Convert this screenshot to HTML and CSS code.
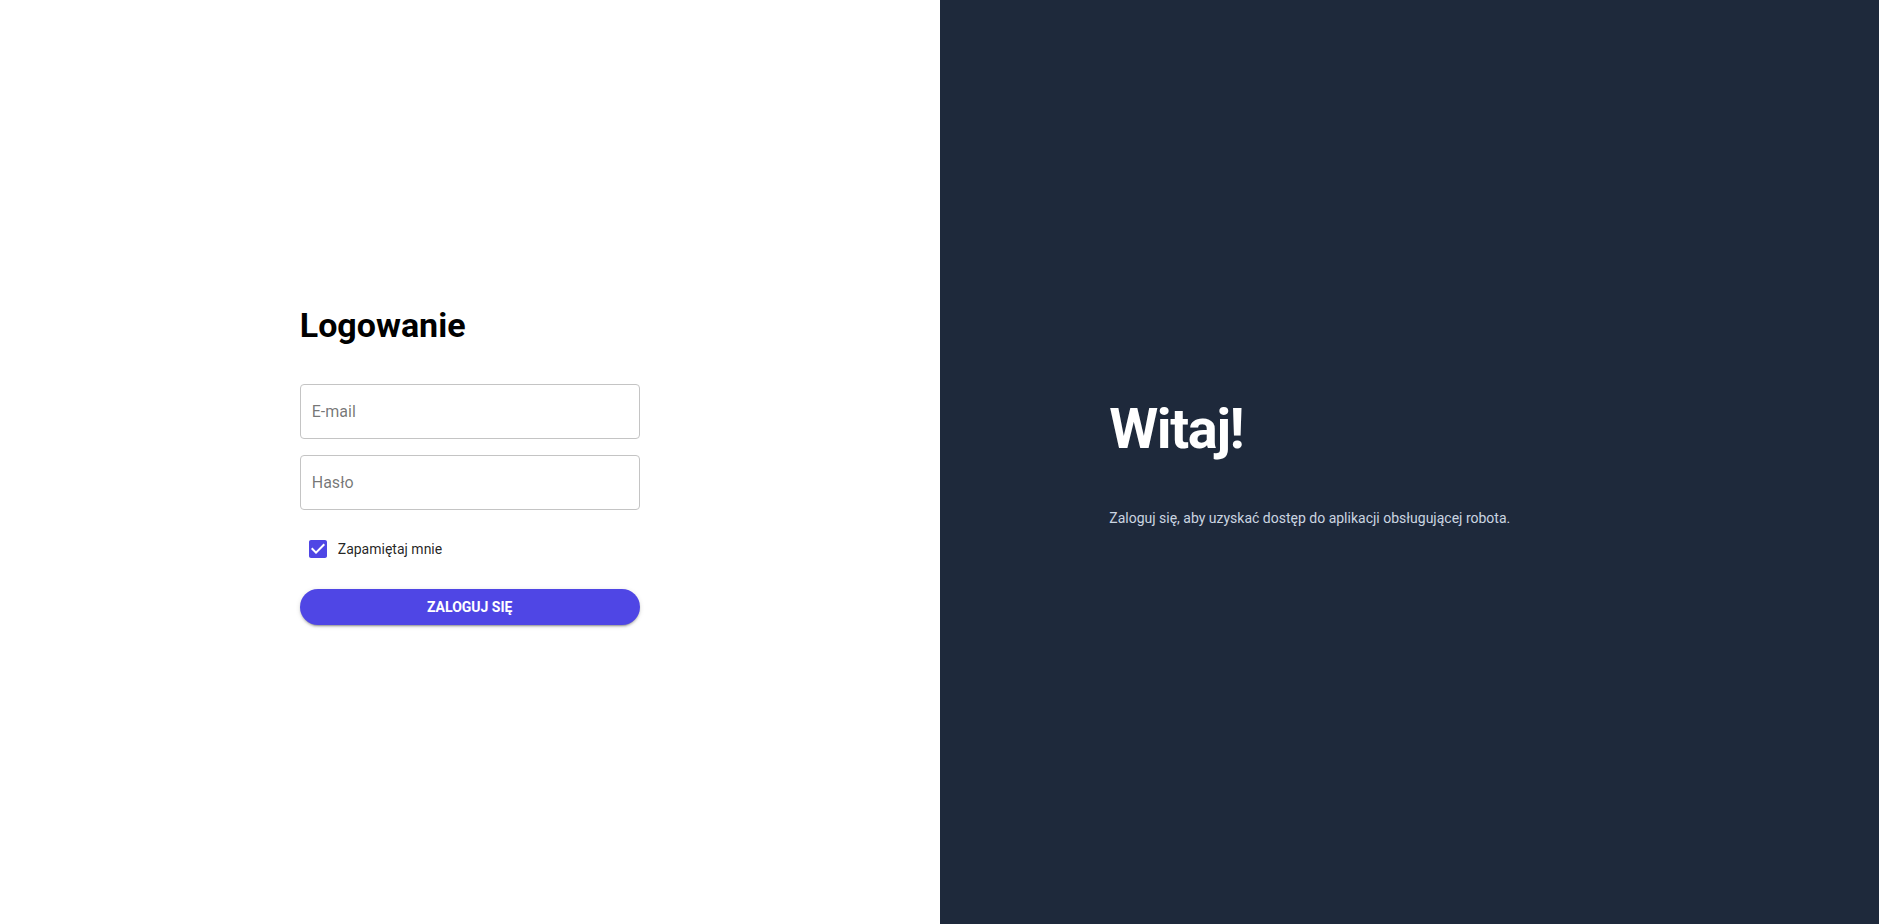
FILE: index.html
```html
<!DOCTYPE html>
<html lang="pl">
<head>
<meta charset="utf-8">
<title>Logowanie</title>
<link rel="stylesheet" href="styles.css">
</head>
<body>
<div class="page">
  <main class="left">
    <form class="form">
      <h1 class="title">Logowanie</h1>
      <input class="field" type="email" placeholder="E-mail">
      <input class="field" type="password" placeholder="Hasło">
      <label class="remember">
        <svg class="check" viewBox="0 0 24 24" width="24" height="24" aria-hidden="true"><path d="M19 3H5c-1.11 0-2 .9-2 2v14c0 1.1.89 2 2 2h14c1.11 0 2-.9 2-2V5c0-1.1-.89-2-2-2zm-9 14l-5-5 1.41-1.41L10 14.17l7.59-7.59L19 8l-9 9z"/></svg>
        <span>Zapamiętaj mnie</span>
      </label>
      <button class="submit" type="button">Zaloguj się</button>
    </form>
  </main>
  <aside class="right">
    <div class="welcome">
      <h2 class="welcome-title">Witaj!</h2>
      <p class="welcome-text">Zaloguj się, aby uzyskać dostęp do aplikacji obsługującej robota.</p>
    </div>
  </aside>
</div>
</body>
</html>
```
FILE: styles.css
```css
* { box-sizing: border-box; }
html, body { margin: 0; height: 100%; }
body { font-family: Roboto, "Noto Sans", Arial, sans-serif; }

.page {
  display: flex;
  height: 100vh;
}

.left {
  flex: 1 1 0;
  background: #ffffff;
  display: flex;
  align-items: center;
  justify-content: center;
}

.form {
  width: 340px;
  display: flex;
  flex-direction: column;
  padding-top: 6px;
}

.title {
  margin: 0 0 38px;
  font-size: 34px;
  line-height: 1.2;
  font-weight: 700;
  color: #000;
}

.field {
  height: 55px;
  width: 100%;
  border: 1px solid #c4c4c4;
  border-radius: 4px;
  padding: 0 11px;
  font-family: inherit;
  font-size: 16px;
  color: rgba(0,0,0,0.87);
  background: #fff;
  outline: none;
  margin: 0 0 16px;
}
.field::placeholder { color: rgba(0,0,0,0.55); }

.remember {
  display: flex;
  align-items: center;
  gap: 8px;
  margin: 11px 0 28px 6px;
  font-size: 14px;
  color: rgba(0,0,0,0.87);
  height: 24px;
}
.check { fill: #4f46e5; display: block; flex: none; }

.submit {
  height: 36px;
  width: 100%;
  border: 0;
  border-radius: 18px;
  background: #4f46e5;
  color: #fff;
  font-family: inherit;
  font-size: 14px;
  font-weight: 700;
  text-transform: uppercase;
  box-shadow: 0 3px 1px -2px rgba(0,0,0,.2), 0 2px 2px 0 rgba(0,0,0,.14), 0 1px 5px 0 rgba(0,0,0,.12);
  cursor: pointer;
}

.right {
  flex: 1 1 0;
  background: #1e293b;
  display: flex;
  align-items: center;
  justify-content: center;
}

.welcome {
  width: 600px;
}

.welcome-title {
  margin: 0;
  font-size: 56px;
  line-height: 1.2;
  font-weight: 700;
  letter-spacing: -0.025em;
  color: #ffffff;
}

.welcome-text {
  margin: 44px 0 0;
  font-size: 14px;
  line-height: 20px;
  color: #cbd5e1;
}
```
